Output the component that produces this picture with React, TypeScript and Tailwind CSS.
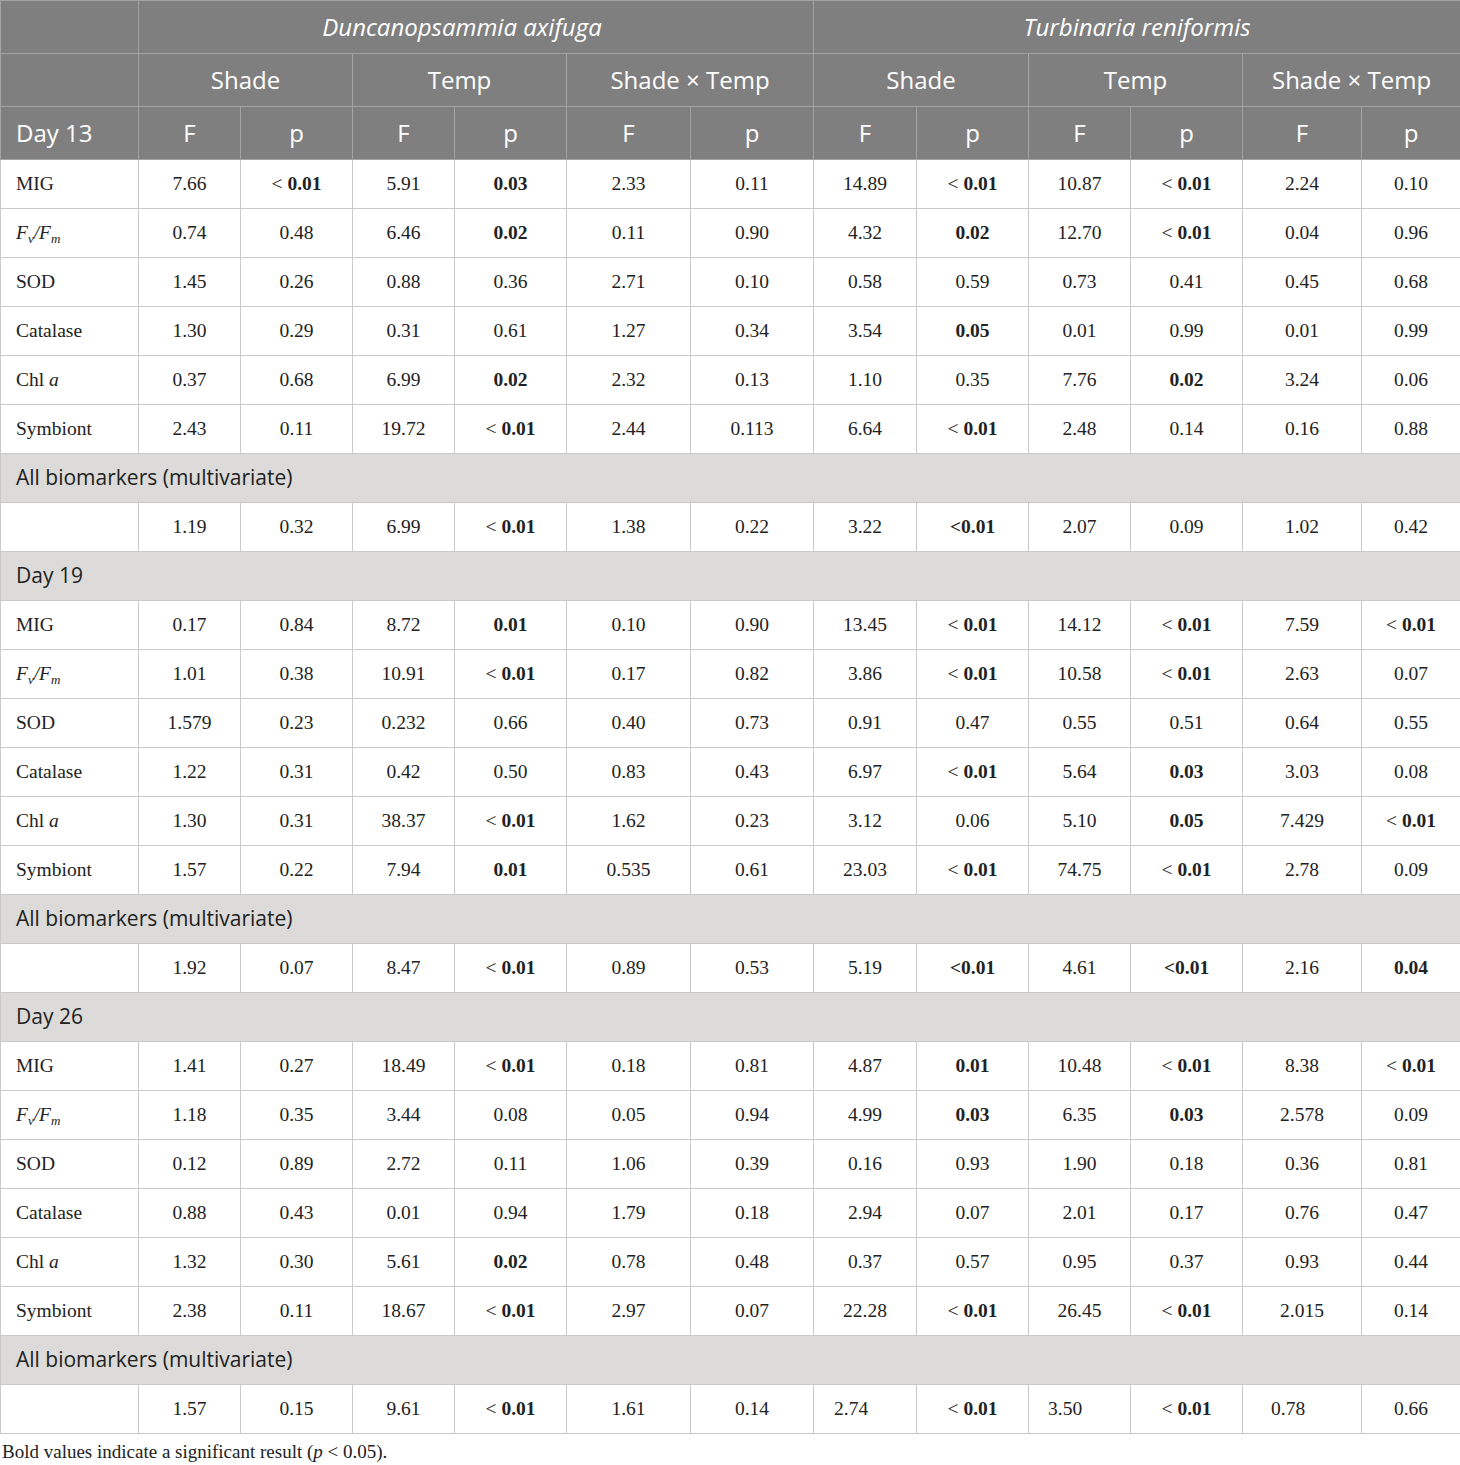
import React from "react";

// value codes: "b:x" bold, "<b" = "< " + bold 0.01, "<!" = bold "<0.01", "L:x" left padded
type Row = { label: React.ReactNode; values: string[] };

const FvFm = (
  <span className="italic">
    F<sub className="text-[13px] italic">v</sub>/F<sub className="text-[13px] italic">m</sub>
  </span>
);
const Chl = (
  <span>
    Chl <span className="italic">a</span>
  </span>
);

const DAY13: Row[] = [
  { label: "MIG", values: ["7.66", "<b", "5.91", "b:0.03", "2.33", "0.11", "14.89", "<b", "10.87", "<b", "2.24", "0.10"] },
  { label: FvFm, values: ["0.74", "0.48", "6.46", "b:0.02", "0.11", "0.90", "4.32", "b:0.02", "12.70", "<b", "0.04", "0.96"] },
  { label: "SOD", values: ["1.45", "0.26", "0.88", "0.36", "2.71", "0.10", "0.58", "0.59", "0.73", "0.41", "0.45", "0.68"] },
  { label: "Catalase", values: ["1.30", "0.29", "0.31", "0.61", "1.27", "0.34", "3.54", "b:0.05", "0.01", "0.99", "0.01", "0.99"] },
  { label: Chl, values: ["0.37", "0.68", "6.99", "b:0.02", "2.32", "0.13", "1.10", "0.35", "7.76", "b:0.02", "3.24", "0.06"] },
  { label: "Symbiont", values: ["2.43", "0.11", "19.72", "<b", "2.44", "0.113", "6.64", "<b", "2.48", "0.14", "0.16", "0.88"] },
];
const ALL13 = ["1.19", "0.32", "6.99", "<b", "1.38", "0.22", "3.22", "<!", "2.07", "0.09", "1.02", "0.42"];

const DAY19: Row[] = [
  { label: "MIG", values: ["0.17", "0.84", "8.72", "b:0.01", "0.10", "0.90", "13.45", "<b", "14.12", "<b", "7.59", "<b"] },
  { label: FvFm, values: ["1.01", "0.38", "10.91", "<b", "0.17", "0.82", "3.86", "<b", "10.58", "<b", "2.63", "0.07"] },
  { label: "SOD", values: ["1.579", "0.23", "0.232", "0.66", "0.40", "0.73", "0.91", "0.47", "0.55", "0.51", "0.64", "0.55"] },
  { label: "Catalase", values: ["1.22", "0.31", "0.42", "0.50", "0.83", "0.43", "6.97", "<b", "5.64", "b:0.03", "3.03", "0.08"] },
  { label: Chl, values: ["1.30", "0.31", "38.37", "<b", "1.62", "0.23", "3.12", "0.06", "5.10", "b:0.05", "7.429", "<b"] },
  { label: "Symbiont", values: ["1.57", "0.22", "7.94", "b:0.01", "0.535", "0.61", "23.03", "<b", "74.75", "<b", "2.78", "0.09"] },
];
const ALL19 = ["1.92", "0.07", "8.47", "<b", "0.89", "0.53", "5.19", "<!", "4.61", "<!", "2.16", "b:0.04"];

const DAY26: Row[] = [
  { label: "MIG", values: ["1.41", "0.27", "18.49", "<b", "0.18", "0.81", "4.87", "b:0.01", "10.48", "<b", "8.38", "<b"] },
  { label: FvFm, values: ["1.18", "0.35", "3.44", "0.08", "0.05", "0.94", "4.99", "b:0.03", "6.35", "b:0.03", "2.578", "0.09"] },
  { label: "SOD", values: ["0.12", "0.89", "2.72", "0.11", "1.06", "0.39", "0.16", "0.93", "1.90", "0.18", "0.36", "0.81"] },
  { label: "Catalase", values: ["0.88", "0.43", "0.01", "0.94", "1.79", "0.18", "2.94", "0.07", "2.01", "0.17", "0.76", "0.47"] },
  { label: Chl, values: ["1.32", "0.30", "5.61", "b:0.02", "0.78", "0.48", "0.37", "0.57", "0.95", "0.37", "0.93", "0.44"] },
  { label: "Symbiont", values: ["2.38", "0.11", "18.67", "<b", "2.97", "0.07", "22.28", "<b", "26.45", "<b", "2.015", "0.14"] },
];
const ALL26 = ["1.57", "0.15", "9.61", "<b", "1.61", "0.14", "L20:2.74", "<b", "L19:3.50", "<b", "L28:0.78", "0.66"];

const COLS = [138, 102, 112, 102, 112, 124, 123, 103, 112, 102, 112, 119, 99];

const td = "border border-[#c9c9c9] h-[49px] p-0 text-[19.5px] text-[#222] align-middle";
const th = "border border-[#a3a3a3] bg-[#7f7f7f] text-white font-normal text-[24px] p-0 align-middle";
const sans = "font-['Open_Sans',sans-serif]";

function Value({ v }: { v: string }) {
  if (v === "<b")
    return (
      <td className={td + " text-center"}>
        {"< "}
        <b>0.01</b>
      </td>
    );
  if (v === "<!")
    return (
      <td className={td + " text-center"}>
        <b>{"<0.01"}</b>
      </td>
    );
  if (v.startsWith("b:"))
    return (
      <td className={td + " text-center"}>
        <b>{v.slice(2)}</b>
      </td>
    );
  if (v.startsWith("L20:")) return <td className={td + " text-left pl-[20px]"}>{v.slice(4)}</td>;
  if (v.startsWith("L19:")) return <td className={td + " text-left pl-[19px]"}>{v.slice(4)}</td>;
  if (v.startsWith("L28:")) return <td className={td + " text-left pl-[28px]"}>{v.slice(4)}</td>;
  return <td className={td + " text-center"}>{v}</td>;
}

function Section({ rows, all }: { rows: Row[]; all: string[] }) {
  return (
    <>
      {rows.map((r, i) => (
        <tr key={i}>
          <td className={td + " text-left pl-[15px]"}>{r.label}</td>
          {r.values.map((v, j) => (
            <Value key={j} v={v} />
          ))}
        </tr>
      ))}
      <tr>
        <td colSpan={13} className={td + " bg-[#dcdbda] text-left pl-[15px] text-[21px] " + sans}>
          All biomarkers (multivariate)
        </td>
      </tr>
      <tr>
        <td className={td}></td>
        {all.map((v, j) => (
          <Value key={j} v={v} />
        ))}
      </tr>
    </>
  );
}

function DayRow({ day }: { day: string }) {
  return (
    <tr>
      <td colSpan={13} className={td + " bg-[#dcdbda] text-left pl-[15px] text-[21px] " + sans}>
        {day}
      </td>
    </tr>
  );
}

export default function App() {
  return (
    <div className="w-[1460px] bg-white font-['Liberation_Serif',serif]">
      <table className="w-[1460px] table-fixed border-collapse">
        <colgroup>
          {COLS.map((w, i) => (
            <col key={i} style={{ width: w }} />
          ))}
        </colgroup>
        <thead className={sans}>
          <tr className="h-[53px]">
            <th className={th}></th>
            <th colSpan={6} className={th + " italic pr-[28px]"}>
              Duncanopsammia axifuga
            </th>
            <th colSpan={6} className={th + " italic"}>
              Turbinaria reniformis
            </th>
          </tr>
          <tr className="h-[53px]">
            <th className={th}></th>
            <th colSpan={2} className={th}>Shade</th>
            <th colSpan={2} className={th}>Temp</th>
            <th colSpan={2} className={th}>Shade × Temp</th>
            <th colSpan={2} className={th}>Shade</th>
            <th colSpan={2} className={th}>Temp</th>
            <th colSpan={2} className={th}>Shade × Temp</th>
          </tr>
          <tr className="h-[53px]">
            <th className={th + " text-left pl-[15px]"}>Day 13</th>
            {Array.from({ length: 6 }).map((_, i) => (
              <React.Fragment key={i}>
                <th className={th}>F</th>
                <th className={th}>p</th>
              </React.Fragment>
            ))}
          </tr>
        </thead>
        <tbody>
          <Section rows={DAY13} all={ALL13} />
          <DayRow day="Day 19" />
          <Section rows={DAY19} all={ALL19} />
          <DayRow day="Day 26" />
          <Section rows={DAY26} all={ALL26} />
        </tbody>
      </table>
      <p className="text-[19px] text-[#222] pt-[6px] pl-[2px] leading-[24px]">
        Bold values indicate a significant result (<span className="italic">p</span> {"<"} 0.05).
      </p>
    </div>
  );
}
